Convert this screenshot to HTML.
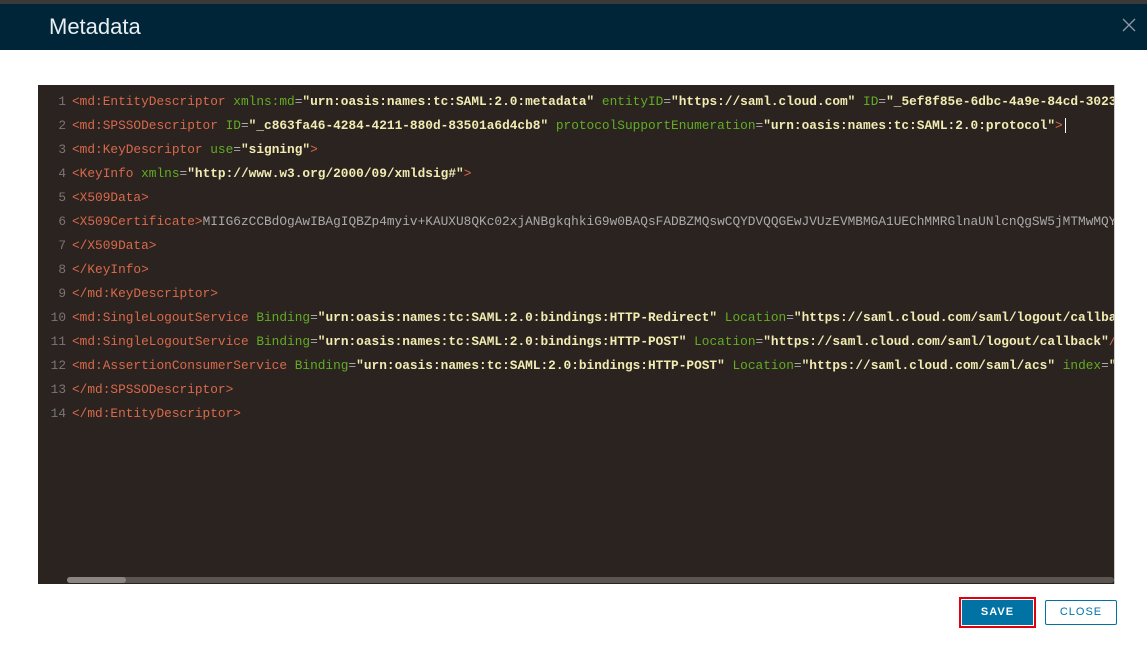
<!DOCTYPE html>
<html><head><style>
html,body{margin:0;padding:0;width:1147px;height:658px;background:#fff;overflow:hidden;font-family:"Liberation Sans",sans-serif}
.topbar{position:absolute;left:0;top:0;width:1147px;height:4px;background:#3a3a3a}
.hdr{position:absolute;left:0;top:4px;width:1147px;height:46px;background:#002538}
.hdr h1{position:absolute;left:49px;top:10px;margin:0;font-weight:normal;font-size:22px;color:#e8eef2}
.x{position:absolute;left:1122px;top:14px}
.ed{position:absolute;left:38px;top:85px;width:1076px;height:499px;background:#2a231f;overflow:hidden;border-right:1px solid #ccc}
.ln{position:absolute;left:0;white-space:pre;font-family:"Liberation Mono",monospace;font-size:12.8px;line-height:24px;height:24px}
.n{display:inline-block;width:28px;text-align:right;color:#777;margin-right:6px}
.t{color:#d9694c}.a{color:#62ad24}.s{color:#f2ebb2;font-weight:bold}.e{color:#aaa}.c{color:#aaa}
.sb{position:absolute;left:29px;top:492px;width:1047px;height:6px;background:#5a5550;border-radius:3px}
.th{position:absolute;left:29px;top:492px;width:59px;height:6px;background:#8a8580;border-radius:3px}
.btn{position:absolute;top:600px;height:25px;font-size:11px;font-weight:bold;letter-spacing:1px;text-align:center;line-height:23px;box-sizing:border-box}
.save{left:959px;width:77px;height:31px;top:597px;border:2px solid #e00010;background:#0072a3;color:#fff;line-height:27px;box-shadow:inset 0 0 0 1px #fff}
.close{left:1045px;width:72px;border:1px solid #0072a3;color:#0072a3;background:#fff;border-radius:2px;font-weight:normal}
</style></head><body>
<div class="topbar"></div>
<div class="hdr"><h1>Metadata</h1>
<svg class="x" width="14" height="14" viewBox="0 0 14 14"><path d="M1 1L13 13M13 1L1 13" stroke="#8a9aa4" stroke-width="1.3"/></svg></div>
<div class="ed">
<div class="ln" style="top:5px"><span class="n">1</span><span class="t">&lt;md:EntityDescriptor</span> <span class="a">xmlns:md</span><span class="e">=</span><span class="s">"urn:oasis:names:tc:SAML:2.0:metadata"</span> <span class="a">entityID</span><span class="e">=</span><span class="s">"https://saml.cloud.com"</span> <span class="a">ID</span><span class="e">=</span><span class="s">"_5ef8f85e-6dbc-4a9e-84cd-3023a</span></div>
<div class="ln" style="top:29px"><span class="n">2</span><span class="t">&lt;md:SPSSODescriptor</span> <span class="a">ID</span><span class="e">=</span><span class="s">"_c863fa46-4284-4211-880d-83501a6d4cb8"</span> <span class="a">protocolSupportEnumeration</span><span class="e">=</span><span class="s">"urn:oasis:names:tc:SAML:2.0:protocol"</span><span class="t">&gt;</span><span style="border-left:1px solid #fff;margin-left:2px"></span></div>
<div class="ln" style="top:53px"><span class="n">3</span><span class="t">&lt;md:KeyDescriptor</span> <span class="a">use</span><span class="e">=</span><span class="s">"signing"</span><span class="t">&gt;</span></div>
<div class="ln" style="top:77px"><span class="n">4</span><span class="t">&lt;KeyInfo</span> <span class="a">xmlns</span><span class="e">=</span><span class="s">"http://www.w3.org/2000/09/xmldsig#"</span><span class="t">&gt;</span></div>
<div class="ln" style="top:101px"><span class="n">5</span><span class="t">&lt;X509Data&gt;</span></div>
<div class="ln" style="top:125px"><span class="n">6</span><span class="t">&lt;X509Certificate&gt;</span><span class="c">MIIG6zCCBdOgAwIBAgIQBZp4myiv+KAUXU8QKc02xjANBgkqhkiG9w0BAQsFADBZMQswCQYDVQQGEwJVUzEVMBMGA1UEChMMRGlnaUNlcnQgSW5jMTMwMQYD</span></div>
<div class="ln" style="top:149px"><span class="n">7</span><span class="t">&lt;/X509Data&gt;</span></div>
<div class="ln" style="top:173px"><span class="n">8</span><span class="t">&lt;/KeyInfo&gt;</span></div>
<div class="ln" style="top:197px"><span class="n">9</span><span class="t">&lt;/md:KeyDescriptor&gt;</span></div>
<div class="ln" style="top:221px"><span class="n">10</span><span class="t">&lt;md:SingleLogoutService</span> <span class="a">Binding</span><span class="e">=</span><span class="s">"urn:oasis:names:tc:SAML:2.0:bindings:HTTP-Redirect"</span> <span class="a">Location</span><span class="e">=</span><span class="s">"https://saml.cloud.com/saml/logout/callback"</span></div>
<div class="ln" style="top:245px"><span class="n">11</span><span class="t">&lt;md:SingleLogoutService</span> <span class="a">Binding</span><span class="e">=</span><span class="s">"urn:oasis:names:tc:SAML:2.0:bindings:HTTP-POST"</span> <span class="a">Location</span><span class="e">=</span><span class="s">"https://saml.cloud.com/saml/logout/callback"</span><span class="t">/&gt;</span></div>
<div class="ln" style="top:269px"><span class="n">12</span><span class="t">&lt;md:AssertionConsumerService</span> <span class="a">Binding</span><span class="e">=</span><span class="s">"urn:oasis:names:tc:SAML:2.0:bindings:HTTP-POST"</span> <span class="a">Location</span><span class="e">=</span><span class="s">"https://saml.cloud.com/saml/acs"</span> <span class="a">index</span><span class="e">=</span><span class="s">"0"</span></div>
<div class="ln" style="top:293px"><span class="n">13</span><span class="t">&lt;/md:SPSSODescriptor&gt;</span></div>
<div class="ln" style="top:317px"><span class="n">14</span><span class="t">&lt;/md:EntityDescriptor&gt;</span></div>
<div class="sb"></div><div class="th"></div>
</div>
<div class="btn save">SAVE</div>
<div class="btn close">CLOSE</div>
</body></html>
